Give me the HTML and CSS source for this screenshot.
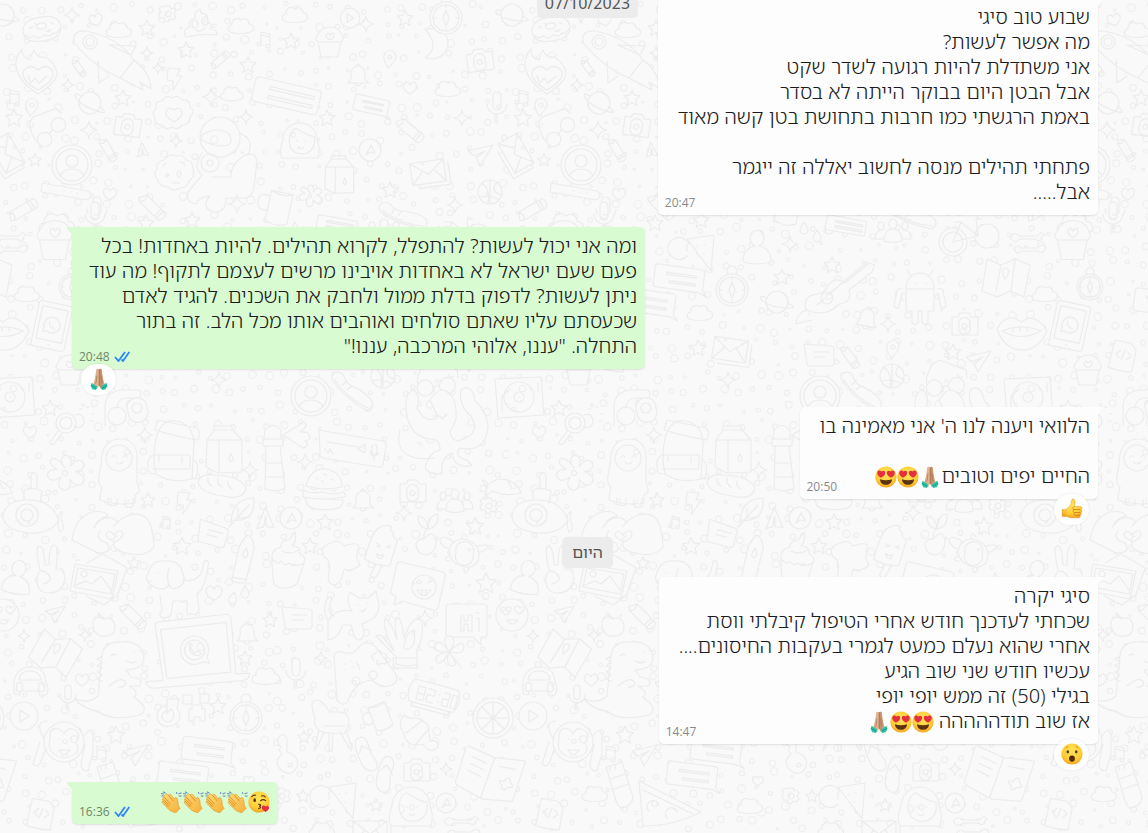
FILE: index.html
```html
<!DOCTYPE html>
<html lang="he" dir="rtl">
<head>
<meta charset="utf-8">
<meta name="viewport" content="width=device-width, initial-scale=1">
<title>צ'אט</title>
<link rel="stylesheet" href="styles.css">
</head>
<body>
<svg class="wallpaper" aria-hidden="true">
  <defs><pattern id="doodles" width="509" height="833" patternUnits="userSpaceOnUse"></pattern></defs>
  <rect width="100%" height="100%" fill="url(#doodles)"/>
</svg>
<svg class="sprite" aria-hidden="true">
  <defs>
    <radialGradient id="face" cx=".5" cy=".35" r=".7"><stop offset="0" stop-color="#ffe65c"/><stop offset=".65" stop-color="#ffcb35"/><stop offset="1" stop-color="#f09a1c"/></radialGradient>
    <linearGradient id="skin" x1="0" y1="0" x2="1" y2="1"><stop offset="0" stop-color="#ffdb78"/><stop offset="1" stop-color="#f5ae35"/></linearGradient>
    <linearGradient id="tan" x1="0" x2="1"><stop offset="0" stop-color="#d6a27c"/><stop offset=".48" stop-color="#e6bb98"/><stop offset=".52" stop-color="#b98562"/><stop offset="1" stop-color="#e0b08c"/></linearGradient>
  </defs>
  <symbol id="love" viewBox="0 0 22 22">
    <circle cx="11" cy="11" r="10.6" fill="url(#face)"/>
    <path d="M5 13.2c3.500 1.300 8.500 1.300 12 0c0 3.500-2.500 5.600-6 5.600s-6-2.100-6-5.600z" fill="#5c3312"/>
    <path d="M6 11.800C3.800 10.300 1.800 8.600 2.300 6.200c.4-2 3-2.500 4.100-.6c1.500-1.500 3.900-.6 3.800 1.400c-.1 2-2.100 3.500-4.200 4.800z" fill="#e62e3f"/>
    <path d="M16 11.800c2.200-1.500 4.200-3.200 3.700-5.600c-.4-2-3-2.500-4.100-.6c-1.500-1.500-3.900-.6-3.800 1.400c.1 2 2.100 3.500 4.200 4.800z" fill="#e62e3f"/>
  </symbol>
  <symbol id="pray" viewBox="0 0 22 22">
    <path d="M8.300 1.200c.8-.8 1.800-.6 2.700 0c.9-.6 1.900-.8 2.700 0c.5 3.800.9 7.500 1.700 10.700c.7 2.400 1.100 4.400 1.600 6.400L13 21l-2-3.500L9 21l-4-2.700c.5-2 .9-4 1.600-6.400c.8-3.200 1.200-6.900 1.700-10.700z" fill="url(#tan)"/>
    <path d="M11 1.500v16M8.900 7.500c-.3 3-.3 6-1.200 8M13.100 7.500c.3 3 .3 6 1.200 8" fill="none" stroke="#a06b4a" stroke-width=".6"/>
    <path d="M3.600 14.800L9.200 18.400L8 22L4.300 21.200L2.600 18z M18.400 14.800L12.800 18.400L14 22l3.700-.8L19.400 18z" fill="#2cc4aa"/>
    <path d="M3.300 17.400l5 3M18.700 17.400l-5 3" stroke="#0c8f7a" stroke-width=".8"/>
  </symbol>
  <symbol id="clap" viewBox="0 0 22 22">
    <path d="M1 2.500l3 .5M3 .8l2.500 1.500M18.500 3l3-1.200M18.800 5l2.700.1M16.500 1l.4 2M1.500 5.200l2-.7" stroke="#6f8fc6" stroke-width="1.100"/>
    <path d="M5.500 3.200c1.200-.7 2.100 0 2.900.9c.8-1.200 2.200-.8 3 .1l2.800 3.600c.4-1.300 1.700-2 2.500-.8c1.200 1.900 1.400 4 1.500 6.200c.1 1.600.7 2.700 2.100 3.800l-4.700 5c-1.900-1.400-4.600-1.300-6.600-3.300L2.700 12.300c-.9-1-.5-2 .3-2.400c-.8-1-.6-1.800.2-2.300c-.5-1.100 0-1.800.8-2.100c0-.8.500-1.900 1.500-2.300z" fill="url(#skin)" stroke="#e0921e" stroke-width=".6"/>
    <path d="M4 5.800l6.500 7.400M3.200 7.800l6.100 6.900M3 10l5.500 6M8.300 4.200l5.300 6.200" fill="none" stroke="#d98518" stroke-width=".8"/>
  </symbol>
  <symbol id="kiss" viewBox="0 0 22 22">
    <circle cx="11" cy="11" r="10.600" fill="url(#face)"/>
    <ellipse cx="6.700" cy="9.200" rx="1.300" ry="1.900" fill="#5c3312"/>
    <path d="M3.800 5.800c1-1.400 2.400-1.900 3.800-1.600M13.500 5c1.500-.5 2.900 0 3.800 1M12.600 9.800c1.500-1.400 3.700-1.300 5-.1M10.500 13.200c2.800-.2 2.600 1.700.6 2c2.200.2 2.100 2-.5 2.200" fill="none" stroke="#5c3312" stroke-width="1.100" stroke-linecap="round"/>
    <path d="M17.700 21c-2.400-1.400-4.300-2.900-3.800-5c.4-1.700 2.700-1.900 3.500-.4c1.200-1.300 3.700-.7 3.700 1.100c0 1.800-1.700 3-3.400 4.300z" fill="#e62e3f"/>
  </symbol>
  <symbol id="thumb" viewBox="0 0 22 22">
    <path d="M1.200 11.600h3.600c2.600-1.600 5-4.300 5.400-6.900c.2-1.500.2-3.500 1.700-3.600c2.800 0 2.600 4.300 1.300 7.300h5.800c2.100 0 2.500 2.500 1 3.200c1.200.7 1 2.600-.2 3c.8 1 .3 2.400-.7 2.700c.5 1.300-.3 2.500-1.700 2.500H11c-2.200 0-3.600-.6-5-1.400H1.200z" fill="url(#face)" stroke="#e0921e" stroke-width=".5"/>
    <path d="M13.500 8.500c-2 .8-2.500 2.500-.5 3h6.500M13 11.600c-1.400 1-1 2.700.5 2.900h6M13.500 14.500c-1.300 1.100-.7 2.600.7 2.800h5" fill="none" stroke="#d07c12" stroke-width=".8"/>
  </symbol>
  <symbol id="wow" viewBox="0 0 22 22">
    <circle cx="11" cy="11" r="10.600" fill="url(#face)"/>
    <ellipse cx="6.800" cy="8.800" rx="1.300" ry="1.600" fill="#5c3312"/><ellipse cx="15.200" cy="8.800" rx="1.300" ry="1.600" fill="#5c3312"/>
    <path d="M4.300 5.400c.8-1.100 1.700-1.600 2.900-1.700M17.700 5.400c-.8-1.100-1.700-1.600-2.900-1.700" fill="none" stroke="#c98520" stroke-width=".9"/>
    <ellipse cx="11" cy="15.600" rx="2.900" ry="3.100" fill="#54290d"/>
  </symbol>
  <symbol id="ticks" viewBox="0 0 16 11"><path d="M1 6l3.500 4L11 1M7.500 8.500L9 10L15.300 1" fill="none" stroke="#2f86f6" stroke-width="1.800"/></symbol>
  <symbol id="tail" viewBox="0 0 8 10"><path d="M0 0h6q2 0 1 1.500Q5 4 0 10z"/></symbol>
</svg>

<main class="chat">
  <div class="day day--floating"><time>07/10/2023</time></div>

  <article class="row row--in"><div class="bubble">
    <svg class="tail"><use href="#tail"/></svg>
    <p class="text">שבוע טוב סיגי<br>מה אפשר לעשות?<br>אני משתדלת להיות רגועה לשדר שקט<br>אבל הבטן היום בבוקר הייתה לא בסדר<br>באמת הרגשתי כמו חרבות בתחושת בטן קשה מאוד<br><br>פתחתי תהילים מנסה לחשוב יאללה זה ייגמר<br>אבל.....</p>
    <div class="meta"><time>20:47</time></div>
  </div></article>

  <article class="row row--out row--reacted"><div class="bubble bubble--long">
    <svg class="tail"><use href="#tail"/></svg>
    <p class="text">ומה אני יכול לעשות? להתפלל, לקרוא תהילים. להיות באחדות! בכל פעם שעם ישראל לא באחדות אויבינו מרשים לעצמם לתקוף! מה עוד ניתן לעשות? לדפוק בדלת ממול ולחבק את השכנים. להגיד לאדם שכעסתם עליו שאתם סולחים ואוהבים אותו מכל הלב. זה בתור התחלה. "עננו, אלוהי המרכבה, עננו!"</p>
    <div class="meta"><time>20:48</time><svg class="ticks" role="img" aria-label="נקרא"><use href="#ticks"/></svg></div>
    <button class="reaction" type="button" aria-label="🙏🏽"><svg class="emoji"><use href="#pray"/></svg></button>
  </div></article>

  <article class="row row--in row--reacted"><div class="bubble">
    <svg class="tail"><use href="#tail"/></svg>
    <p class="text">הלוואי ויענה לנו ה' אני מאמינה בו<br><br>החיים יפים וטובים<svg class="emoji" role="img" aria-label="🙏🏽"><use href="#pray"/></svg><svg class="emoji" role="img" aria-label="😍"><use href="#love"/></svg><svg class="emoji" role="img" aria-label="😍"><use href="#love"/></svg></p>
    <div class="meta"><time>20:50</time></div>
    <button class="reaction" type="button" aria-label="👍"><svg class="emoji"><use href="#thumb"/></svg></button>
  </div></article>

  <div class="day"><span>היום</span></div>

  <article class="row row--in row--reacted"><div class="bubble">
    <svg class="tail"><use href="#tail"/></svg>
    <p class="text">סיגי יקרה<br>שכחתי לעדכנך חודש אחרי הטיפול קיבלתי ווסת<br>אחרי שהוא נעלם כמעט לגמרי בעקבות החיסונים....<br>עכשיו חודש שני שוב הגיע<br>בגילי (50) זה ממש יופי יופי<br>אז שוב תודההההה <svg class="emoji" role="img" aria-label="😍"><use href="#love"/></svg><svg class="emoji" role="img" aria-label="😍"><use href="#love"/></svg><svg class="emoji" role="img" aria-label="🙏🏽"><use href="#pray"/></svg></p>
    <div class="meta"><time>14:47</time></div>
    <button class="reaction" type="button" aria-label="😮"><svg class="emoji"><use href="#wow"/></svg></button>
  </div></article>

  <article class="row row--out"><div class="bubble bubble--short">
    <svg class="tail"><use href="#tail"/></svg>
    <p class="text"><svg class="emoji" role="img" aria-label="😘"><use href="#kiss"/></svg><svg class="emoji" role="img" aria-label="👏"><use href="#clap"/></svg><svg class="emoji" role="img" aria-label="👏"><use href="#clap"/></svg><svg class="emoji" role="img" aria-label="👏"><use href="#clap"/></svg><svg class="emoji" role="img" aria-label="👏"><use href="#clap"/></svg></p>
    <div class="meta"><time>16:36</time><svg class="ticks" role="img" aria-label="נקרא"><use href="#ticks"/></svg></div>
  </div></article>
</main>
<script src="wallpaper.js"></script>
</body>
</html>
```
FILE: styles.css
```css
* { box-sizing: border-box; }

body {
  margin: 0;
  background: #f9f9f9;
  color: #1c1c1c;
  font-family: "Noto Sans Hebrew", "Open Sans", "Noto Sans", sans-serif;
  font-size: 20px;
  font-weight: 300;
  line-height: 25px;
  height: 100vh;
  overflow: hidden;
}

.wallpaper {
  position: absolute;
  inset: 0;
  width: 100%;
  height: 100%;
}
.wallpaper path,
.wallpaper circle {
  fill: #f9f9f9;
  stroke: #ececec;
  stroke-width: 1.2;
  stroke-linejoin: round;
  stroke-linecap: round;
  vector-effect: non-scaling-stroke;
}
.wallpaper circle { stroke: #efefef; }

.sprite { position: absolute; width: 0; height: 0; }

.chat {
  position: relative;
  display: flex;
  flex-direction: column;
  margin-top: -14px;
  padding-left: 27px;
}

.row { display: flex; margin-top: 12px; padding: 0 50px 0 45px; }
.row--out { justify-content: flex-end; }
.row--reacted { padding-bottom: 26px; }
.day + .row { margin-top: 9px; }
.day--floating + .row { margin-top: 12px; }

.bubble {
  position: relative;
  max-width: 573px;
  padding: 6px 8px 11px 20px;
  border-radius: 5px;
  background: #fdfdfd;
  box-shadow: 0 1px 2px rgba(0, 0, 0, 0.1);
}
.row--out .bubble { background: #d9fbd1; }
.bubble--long { padding-left: 8px; }
.bubble--short { padding-left: 88px; }

.tail {
  position: absolute;
  top: 0;
  right: -6px;
  width: 8px;
  height: 10px;
  fill: #fdfdfd;
}
.row--out .tail {
  right: auto;
  left: -6px;
  fill: #d9fbd1;
  transform: scaleX(-1);
}

.text { margin: 0; }

.emoji {
  width: 22px;
  height: 22px;
  vertical-align: -5px;
}

.meta {
  position: absolute;
  left: 7px;
  bottom: 4px;
  display: flex;
  direction: ltr;
  align-items: flex-start;
  gap: 4px;
  color: #8a8a8a;
  font-family: "Open Sans", "Noto Sans", sans-serif;
  font-size: 12px;
  font-weight: 400;
  line-height: 16px;
}
.row--out .meta { color: #6d8768; }
.ticks { width: 16px; height: 11px; margin-top: 2px; }

.reaction {
  position: absolute;
  right: 9px;
  bottom: -26px;
  display: flex;
  align-items: center;
  justify-content: center;
  width: 35px;
  height: 31px;
  padding: 0 0 2px;
  border: 0;
  border-radius: 16px;
  background: #fff;
  box-shadow: 0 0 2px rgba(0, 0, 0, 0.12);
}
.row--out .reaction { right: auto; left: 9px; }

.day {
  align-self: center;
  margin-top: 12px;
  padding: 3px 10px;
  border-radius: 5px;
  background: #ececec;
  color: #545454;
  font-size: 16px;
  font-weight: 400;
}
.day--floating { position: absolute; top: 1px; margin: 0; padding: 4px 8px 2px; }
```
FILE: wallpaper.js
```js
const star = 'M0-8l2.400 5.200l5.600.6l-4.200 3.900l1.200 5.800l-5-3l-5 3l1.200-5.800l-4.200-3.900l5.600-.6z';
const shapes = {
  star,
  spark: 'M0-8q1 7 8 8q-7 1-8 8q-1-7-8-8q7-1 8-8z',
  heart: 'M0 6C-6 3-8-1-6-4c2-3 5-2 6 1c1-3 4-4 6-1c2 3 0 7-6 10z',
  cloud: 'M-11 7c-3-2-2-7 2-7c-1-5 5-9 9-5c4-3 8 0 8 4c5 0 6 6 2 8c-6 2-15 2-21 0z',
  music: 'M-5 6v-12l9 2v12M-5-3l9 2M-5 6a2 2 0 1 0-3 2q3 0 3-2M4 8a2 2 0 1 0-3 2q3 0 3-2',
  gear: 'M-2-8h4l1 3l3-1l2 3l-2 3l2 3l-3 3l-3-1l-2 3l-3-1l-1-3l-4 0l-1-4l2-2l-2-3l3-3l3 1zM3 0a3 3 0 1 0-6 0a3 3 0 1 0 6 0',
  drop: 'M0-6q-4 6-4 8a4 4 0 0 0 8 0q0-2-4-8z',
  pin: 'M-2 8q-5-8-4-12a6 6 0 0 1 12 1q-1 5-8 11zM2-3a2 2 0 1 0-4 0a2 2 0 1 0 4 0',
  plane: 'M-12-4L13-10L0 11L-4 3L5-4L-6 1z',
  crayon: 'M-16 3l4-8l26 0q4 4 0 10h-26zM-12-5l2 5l-2 5M8-5v10M11-5v10',
  bell: 'M-10 8q4-3 3-10a7 7 0 0 1 14 0q-1 7 4 10zM-2-9a2 2 0 1 1 4 0M-3 8a3 3 0 0 0 6 0',
  mic: 'M-4-12a4 4 0 0 1 8 0v10a4 4 0 0 1-8 0zM-10-4a10 10 0 0 0 20 0M0 6v9M-2 6v9',
  camera: 'M-13-7h6l2-4h9l2 4h7v18h-26zM5 2a6 6 0 1 0-11 0a6 6 0 1 0 11 0M2 2a2.500 2.500 0 1 0-5 0a2.500 2.500 0 1 0 5 0',
  msg: 'M-16-11l3 20q0 2 3 2h21q3 0 3-3v-14q0-3-3-3zM-6-3h15M-6 2h11',
  speech: 'M-23-11h44q3 0 3 3v18l5 5l-9-3h-43q-3 0-3-3v-17q0-3 3-3zM-14-4h30v2h-30zM-10 4h26v2h-26z',
  envelope: 'M-19-11h34v22h-34zM-19-11l17 13l17-13M-19 11l12-13M15 11l-11-13M19-8v23h-32',
  user: 'M20 0a20 20 0 1 0-40 0a20 20 0 1 0 40 0M16 0a16 16 0 1 0-32 0a16 16 0 1 0 32 0M6-4a6 6 0 1 0-12 0a6 6 0 1 0 12 0M-12 11q3-7 12-7t12 7',
  compass: 'M16 0a16 16 0 1 0-32 0a16 16 0 1 0 32 0M13 0a13 13 0 1 0-26 0a13 13 0 1 0 26 0M0-8l3 8l-3 8l-3-8zM-4-16a5 5 0 1 1 8 0M10 0h3M-13 0h3M0 10v3M0-13v3',
  planet: 'M11 0a11 11 0 1 0-22 0a11 11 0 1 0 22 0M-10-4q-8-3-6 1q7 9 30 9q6-1-4-5',
  donut: 'M19 0q0 12-19 12t-19-12q0-12 19-12t19 12M-18 3q5 6 9 2q5 6 10 1q5 4 9 0q5 2 9-5M5-3q0 3-5 3t-5-3t5-3t5 3M-12-3l3-1M9-5l3 2M-6-7l2 2M5 3l3-1',
  rocket: 'M-38-10q-2-12 12-11q32 6 48 29l-14 18q-28-12-46-36zM-15-10a7 7 0 1 0-14 0a7 7 0 1 0 14 0M-18-10a4 4 0 1 0-8 0a4 4 0 1 0 8 0M-3-7l27 1l-5 9zM-14 9l1 22l10-7M8 26l14-18q16 12 17 29l-11-7l3 8z',
  poop: 'M-14 13q-5-7 4-10q-3-7 5-9q-1-6 5-9q0 5 5 5q4 3 2 8q7 2 3 7q8 0 7 6q-16-2-31 2zM-2 0a3 4 0 1 0-6 0a3 4 0 1 0 6 0M8-3a3 4 0 1 0-6 0a3 4 0 1 0 6 0M-4 6q5 3 9-2',
  flame: 'M-20-2q-4-12 5-22q0 9 8 11q1-6 4-10q4 9 11 7q10 5 12 16q0 9-19 21q-17-11-21-23zM1-3q7-7 14 0q5 9-14 20q-19-11-14-20q7-7 14 0M-9 3l3 7l4-5l4 5l8-7',
  badge: 'M-18-5q-2-8 6-8q4-7 10-3q6-4 10 2q8-1 8 7q6 5 0 10q0 8-8 8q-5 6-10 2q-6 4-10-2q-8 0-7-7q-4-5 1-9zM0 8q-10-6-8-11q4-5 8-1q5-4 8 1q1 6-8 11z',
  glasses: 'M-20-12l6-6l28 0l3 7M-20-12q-2 14 1 20M-2 10a8 8 0 1 0-16 0a8 8 0 1 0 16 0M18 0a8 8 0 1 0-16 0a8 8 0 1 0 16 0M-3 6l5-3',
  cookie: 'M19-3q2 8-4 12q-1 7-9 7q-7 4-12-1q-9 0-10-7q-6-6-1-11q-1-8 7-9q5-7 12-4q8-2 10 4q7 1 7 9zM-11-6l3-3M-8 5q0-5 3-2zM5-10q7 0 5 4M7 2a2 3 0 1 0-4 0a2 3 0 1 0 4 0M-1 11h6',
  astro: 'M20-28a20 20 0 1 0-40 0a20 20 0 1 0 40 0M-18-30q17-10 28 0q3 8-2 10q-13 3-26-5zM-18-12q-10 15 0 22l-14 17q-3 10 8 12q4-8 14-8q-10 12 4 16q12 1 12-14h16q10 1 12-10l3-28q-2-8-12-5q-15 10-14 22h-19M20-32q15 7 8 22M-1-2a9 9 0 1 0-18 0a9 9 0 1 0 18 0M-7-2a3 3 0 1 0-6 0a3 3 0 1 0 6 0',
  ruler: 'M-24-8l46 8q4 2 2 7l-3 2l-46-8zM-2 0h1M5 1h1M11 2h1',
  mug: 'M-10-16h22v30q-11 6-22 0zM-10-10q-12-3-11 8q1 9 11 6M-10-16q11 5 22 0',
  card: 'M-28-12h60q3 0 3 4v18q0 3-3 3h-60q-4 0-4-4v-17q0-4 4-4zM-16-5h45v3h-45zM-16 4h45v3h-45z',
  person: 'M-14 12q0-14 12-16a7 8 0 1 1 4 0q13 3 12 16q-14 4-28 0z',
  people: 'M-9 9q0-12 9-12t9 12q-9 3-18 0M4-8a4 5 0 1 0-8 0a4 5 0 1 0 8 0M-10 7h-8q0-9 8-9M10 7h8q0-9-8-9M-9-6a3 4 0 1 0-6 0a3 4 0 1 0 6 0M15-6a3 4 0 1 0-6 0a3 4 0 1 0 6 0',
  bike: 'M-2 6a14 14 0 1 0-28 0a14 14 0 1 0 28 0M-6 6a10 10 0 1 0-20 0a10 10 0 1 0 20 0M30 0a12 12 0 1 0-24 0a12 12 0 1 0 24 0M-16 6l8-20l17 14l-25 6M-8-14h-7M9 0l-2-17h6',
  slice: 'M-16-11l27-4l-3 36zM-14-6a11 11 0 1 0-2 12M-16-6v7M-6-4h1M1-5h1M0 4h1',
  map: 'M-18-18l14 6l14-6l15 6l-6 32l-14-6l-13 6l-15-6zM-4-12l-5 26M10-18l-4 32M3-4a3 3 0 1 0-5 0q0 3 2 6q3-3 3-6',
  android: 'M-14-11a14 14 0 0 1 28 0v24h-6v12q-3 3-6 0v-12h-4v12q-3 3-6 0v-12h-6zM-14-9h28M-9-22l-4-6M9-22l4-6M-18-9q-4-2-5 2l-3 15q2 4 5 1l3-14M18-9q4-2 5 2l3 15q-2 4-5 1l-3-14M-5-15h1M5-15h1',
  guitar: 'M-34 18q-4-14 11-16q8-1 11-9q8-9 17-2l24-20l6 2l-3 7l-23 18q4 12-10 14q-12 14-33 6zM-7 6a6 6 0 1 0-12 0a6 6 0 1 0 12 0M-23 13l7-6M-12 3l39-33M-34 18q-10 4-10 14l16-4',
  tablet: 'M-14-22h28q3 0 3 3v40q0 3-3 3h-28q-3 0-3-3v-40q0-3 3-3zM-13-17h26v33h-26zM8 0a8 8 0 1 0-15 4l-1 4l4-1a8 8 0 0 0 12-7M-3-3q0 6 6 6M0 20h1',
  lips: 'M-25-4q7-13 17-11l7 4l7-4q12 0 19 13q-9 20-26 19q-17-1-24-21zM-20-2q20-8 39 0q-20 11-39 0M-9-5v4M-2-6v4M5-6v4',
  ball: 'M12 0a12 12 0 1 0-24 0a12 12 0 1 0 24 0M-8-9q9 8 6 20M7-10q-8 10 5 13M-11 5q11-3 20 3M0-12v24',
  shoe: 'M-24-11q5-3 9 0q6 8 14 7q15 2 22 8q3 7-3 10q-27-5-42-17q-4-5 0-8zM-22-4q17 13 40 15M-10-7l-3 5M-4-3l-3 4',
  jar: 'M-12-7q3-8 12-8t12 8q3 4-1 7l-3 15h-17l-3-15q-4-3 0-7M-12 0h24M-4-7q2-4 4 0q3-4 4 0q0 3-4 5q-4-2-4-5',
  doc: 'M-11-13h17l6 6v22q-12 2-24 0zM-3-4l-4 4l4 4M4-4l4 4l-4 4M1-5l-2 10',
  turntable: 'M-24-18l46-2l3 38l-46 3zM15 0a15 15 0 1 0-30 0a15 15 0 1 0 30 0M5 0a5 5 0 1 0-10 0a5 5 0 1 0 10 0M-9-8l-8 7v16M19-14v9M1 0h-1',
  phones: 'M-21 14v-19q0-17 20-17h14q4 3 0 8h-12q-9 0-10 10M0 4a9 9 0 1 0-18 0a9 9 0 1 0 18 0M21-4a10 10 0 1 0-19 4a10 10 0 1 0 19-4M16-4a5 5 0 1 0-10 0a5 5 0 1 0 10 0',
  magnify: 'M10-2a10 10 0 1 0-20 0a10 10 0 1 0 20 0M6-2a6 6 0 1 0-12 0a6 6 0 1 0 12 0M-8 6l-8 11q0 4 4 2l8-11M9-10q9-3 9 8q-2 6-10 4M13-16h3M20-18h3M26-11h2M24-4h3',
  kid: 'M-16-5q0-26 19-26t17 24v20q5 10-2 12v8q-16 3-35-3q0-7 2-13q-6-2-1-22M15-12a13 13 0 1 0-26 0a13 13 0 1 0 26 0M-5-13q2-3 4 0M6-13q2-3 4 0M-1-8q3 4 7 0M-9 28v6q5 3 9 0v-5M8 30v6q4 3 8 0v-8',
  flower: 'M0-4c-9-11 8-14 4-1c8-12 17 2 4 4c13 4 4 17-4 6c2 13-14 9-7-2c-10 8-16-6-3-6c-11-5-3-15 6-1M2 0a2 2 0 1 0-4 0a2 2 0 1 0 4 0',
  sub: 'M-27 2q1-17 25-17q24 0 31 20q-8 14-29 13q-25-2-27-16zM-6-15v-10q9-3 18 1l-2 12M1-26v-14q3-4 6 0v14M8 0a11 11 0 1 0-22 0a11 11 0 1 0 22 0M3 0a6 6 0 1 0-12 0a6 6 0 1 0 12 0M27 3q8-13 4 0q5 13-1 14q-3-7-1-12',
  pack: 'M-16-12q6-20 20-17q16 2 18 21l-2 37q-22 5-36-5q-4-16 0-36zM-19 5h37v14h-37M-13 5v6M10 7v6M-14-30l39 8q4 3 1 12q-20-3-43-10zM-18 5q-9 2-5 18l6 1M22 10q6 4 2 18l-5 1',
  milk: 'M-18-10l7-10l19 0l9 10v32l-24 1l-12-6zM-11-20v-4h18v4M-18-10l35 0M-6-10v32M6 4q-4 6 0 8q4-2 0-8',
  light: 'M-10-25q8-9 16 0v9h-17zM-12-16h20v7h-20zM-9-9h14l5 42q-9 5-20 1zM-8 8h15M-9 22h18M8-20l21-13q6 3-4 10q10-1 9 4q4 3-4 5q6 4-2 7z',
  banner: 'M-33-20l64 11q4 1 3 5l-3 18q0 4-5 3l-55-9q-4-1-3-6zM-25-8l31 5M-27-1l3 4l2-4l3 5M6-1l7-5v9zM20-4q3-3 5 0v7q-3 3-5 0zM18 1q2 9 9 2M22 7v4',
  squid: 'M-12-30q12-20 24 0q6 20-4 31q2 16 19 5q10-7 2-20q-13-11-10-26q11-7 14 10q13 14 13 27q-2 26-28 21q-7 8 7 12l5 6q-18 3-20-13q-12 5-10 21q-20 0-16-10q5-13 14-14q0-12-10-11q-18-2-23-22q-4-25 7-27q7 5 3 18q9 17 21 9zM-10-14l8 0l2 3l5-5M-42 0q-5 20 10 26q9 4 24 2',
  bread: 'M-24-3q2-9 17-7q27 1 31 14q-4 12-23 7q-23-3-25-14M-14-7q-1 5 4 8M-4-7q-1 6 4 9M6-4q-1 5 4 8',
  burger: 'M-18-3q4-18 20-17q16 3 16 18q-18 4-36-1zM-21 1q7 4 20 2q10 4 20 0q4 2 2 5q-21 4-42 0zM-19 9l38 2q0 9-9 9q-16 2-26-3zM-8-11l2 1M0-15l2 1M7-10l2 1M-2-8l1 1',
  fish: 'M-16 3q11-12 24-6q9 5 11 12q-17 4-28-2l-8 5l2-9l-5-7q5 0 6 5M5-5l5 10M12 4h1',
  hands: 'M-42 12q3-22 20-28q13-2 16 4q-10 2-14 12q6-12 18-10q9 3 2 8q7-9 16-11q16-4 21 11q3 10 3 21q-8 10-23 7q-20-3-17-12q-2-4 3-6M-14 3q-6 8 7 12q7 10-9 10l-14-7l-12-6M0 7q7-8 9-1q0 4-8 8q-9-4-9-8q3-6 8 1',
  bolt: 'M-6-10l12 1l-3 7h5l-9 14v-9l-6-1z',
  leaf: 'M-12 13q0-27 23-27q2 25-23 22M-14 15l20-22M-5 5v-9M-4 6l11-1',
  round: 'M11 0a11 11 0 1 0-22 0a11 11 0 1 0 22 0M-4 5l5-10l4 8l-5-1z',
  cherry: 'M-4 1q11-12 12 4q-1 10-9 12q-10 0-11-11q2-6 8-5q-1-8 4-10q-10-1-10-13q9 1 10 13q1-15 10-15q1 13-10 15',
  pop: 'M-14 11q3-25 9-32q6-6 13-4q-2 4 3 6q-1 6 5 6l-4 27q-11 3-26-3M-2 15l-4 11q3 4 6 1l4-11M-4-6l4 2l-4 1M10-6l-4 2l4 1M-3 4q4 3 7 0l-1 4q-4 2-6-4',
  turtle: 'M15 2q0 14-14 13q-15-3-16-16q2-12 15-12q14 3 15 15M9 2a9 9 0 1 0-17-1a9 9 0 1 0 17 1M-10-10q-13-9-14-1q2 6 9 8M-2-14q0-9 5-1M13-6q15-3 9 3q-4 4-8 3M0 16q0 10 5 0M-15 4q-8 4 1 5',
  blob: 'M-17-14q14-9 19 0q14-5 15 1q-5 9 1 18q-7 7-16 4q-2 14-9 16q-9-1-6-12q2-14-5-16q-4-8 1-11z',
  cupcake: 'M-16-4q-1-10 9-12q-1-6 8-7q3-4 6-8q2 10-3 14q9 0 8 8q7 3 4 9l-7 21q-13 8-23 1q-2-15-2-26zM-16-4q7 7 9 2q4 6 8 2q5 5 15 0M-6-12q8 4 17-1',
  bottle: 'M-7-10l3-7q4-9 9-1l3 8l-4 35q-7 3-14 0zM0-9q-5 8 0 10q5-3 0-10M-10 22h14',
  dog: 'M-27-12q4-14 18-12q14-1 17 13q4 9-6 14q-7 2-8-4q-3 7-13 4q-13-6-8-15M-6-17q-3 10 0 18M-18-12h1M-26-4h3M8-5q19 4 21-19q6-2 4 5q-3 23-11 28l2 16q-2 6-8 4l-4 0v-13l-14 0l-2 14q-7 5-11 1v-3l2-2l-2-15',
  photo: 'M-25-13l43 7l-6 28l-42-8zM-20-17l-5 0M-22-9l37 6l-4 20l-37-7zM-13-14l16-9l16 9l8 5l-9 26M-24 8l10-4l6 3l9-8l10 14M-13-3a3 3 0 1 0-6 0a3 3 0 1 0 6 0M-14 19l18 9l14-10',
  peace: 'M-12 0q-5-22-1-24q5-1 6 19l4 0q0-20 5-20q5 0 2 24q9 0 9 10q-3 14-16 14q-13 0-12-15q2-12 11-4q6 7-5 10',
  pet: 'M-22 26v-19q7-13 24-10q-7-10-2-19l9 6h9l8-7l3 14q0 10-7 14l-10 5q4 9 0 14q-5 5-8-2l-3-11h-8l-5 10q-7 5-10 5M-22 7q-7-15 1-24q5-2 1 6q-2 12 4 13M7-9h1M17-11h1M10-4q3 4 6-1',
  wink: 'M-21-21q0-3 4-2l42 10q3 2 2 5l-7 31q-2 3-5 2l-31-9l-8 4l2-9q-7-2-5-6zM18 2a12 12 0 1 0-24 0a12 12 0 1 0 24 0M3-3a2 2 0 1 0-4 0a2 2 0 1 0 4 0M9-2l5-2M-1 5h14q-8 11-14 0M4 6v5M8 6v5',
  bubble: 'M-17-16h35q3 0 3 3v27q0 3-3 3h-3v8l-8-8h-24q-3 0-3-3v-27q0-3 3-3zM-5-5v16M10-7h3M10-2h3v13M-2-5v6h4v-6h4v16h-4v-7h-4v7h-4',
  smiley: 'M16 0a16 16 0 1 0-32 0a16 16 0 1 0 32 0M-6 0q-7-3-5-7q4-2 5 1q2-4 5-1q1 3-5 7M7-1q-6-4-4-7q4-2 5 1q3-3 4 0q0 3-5 6M-5 5h11q-5 8-11 0',
  apple: 'M0-5q-12-5-11 7q2 11 11 10q11 1 11-10q-2-11-11-7q-3-3-6-6M0-6q-5-2-5-5',
  dino: 'M-14-20q1-15 20-14q21-1 22 17q-1 10-18 11l5 7q13 1 9 9h-11q11 6 5 11l7 6q7 7-1 12q-30 7-42-4q-14-1-24-13q13 7 24-2zM18-24h1M23-25h1M10-15q7 4 10 0M-5-20q3-3 5-1M-7 10q13-11 17-3q-2 5-7 4M-14-20l-5 3l5 3l-5 4l5 2l-5 4l5 3l-5 4l5 2',
  laptop: 'M-38-34q0-4 4-4l68-4q4 0 4 4l2 56h14q-1 7-8 7l-88 3q-7 0-8-7h17zM-33-30l66-4l2 50l-64 3zM14-8a14 14 0 1 0-28 0a14 14 0 0 0 22 12l6 2l-2-6q2-4 2-8M10-8a10 10 0 1 0-20 0a10 10 0 1 0 20 0M-5-11q0 9 10 9l1-3l-3-2l-3 2l-4-5l2-3l-2-2z',
  pad: 'M-28-19q2-7 12-3q7 2 13-6q7-8 16-1l20 27q5 8-3 12q-10 5-20-5q-18 2-24 21q-5 7-11-1zM12-15q-5-5 1-6q3-7 7-1q7 0 3 6q3 7-3 4q-6 4-5-3M-18-11h1M-12-14h1M-17-5h1M-9-8h1M-5-12l3 7M15 0a4 4 0 1 0-8 0a4 4 0 1 0 8 0M-2 6a4 4 0 1 0-8 0a4 4 0 1 0 8 0',
  ok: 'M-24-5q5-3 9 4l9 11q-14-29-8-32q4 2 11 20q-4-22 1-21q4 1 6 20q9-25 18-17q2 17-5 29v14q-10 4-21 0v-7zM5 1q-4 9 4 7q8-5 5-19q-8 3-9 12M-7 17h24v10h-23z',
  clover: 'M0 0q-19 1-13-9q6-3 13 9q-9-16 1-16q8 3-1 16q15-15 15-4q-1 7-15 4q11 13 3 14q-7-1-3-14q-9 16-13 9q-2-7 13-9l12 15',
  car: 'M-16 11v-13q3-14 17-14t15 15q4 7 0 13h-7v-4h-19v4zM-11-3q1-9 11-9t11 9zM-8 4a3 3 0 1 0-5 0a3 3 0 1 0 5 0M14 4a3 3 0 1 0-5 0a3 3 0 1 0 5 0',
  alarm: 'M-22-13h45q7 10 0 23h-45q-7-11 0-23M-16-7v7h7v-7zM-16 0v6h7v-6M-6-7h7v6h-7v7h7M6-4v1M6 3v1M10-7h6v6h-6v7h6v-7M19-7h5v13h-5zM-19 10v4h38v-4',
  play: 'M14 0a14 14 0 1 0-28 0a14 14 0 1 0 28 0M-4-6l9 6l-9 6z',
  refresh: 'M8-8q7 11-3 17q-12 5-17-6q-1-11 9-14l1 5q-6 3-5 8q5 7 10 2q4-6-1-11l-4 4l0-14h12z',
  blocks: 'M-13-13h9v9h-9zM4-14h9v9h-9zM-4-3h10v4h3v12h-5v-4h-6v4h-5v-12h3z',
  seat: 'M-18-22q6-9 18 9h9q13 1 9 15l-4 7l-17-1q-14-2-12-14q-3-9-3-16M-6 1h21M-11 5l-5 21l3-4l7-14M-1 7v19h3l1-18M10 7l11 19l1-2l-5-17',
  citrus: 'M20 0a20 20 0 1 0-40 0a20 20 0 1 0 40 0M16 0a16 16 0 1 0-32 0a16 16 0 1 0 32 0M0-16v32M-16 0h32M-11-11l22 22M11-11l-22 22',
  monkey: 'M20 0a20 20 0 1 0-40 0a20 20 0 1 0 40 0M-20-3q-10-18 3-18M20-6q6-10 9-1v18l-5 18q-8 0-7-8l4-19M-24 0l-7 22q5 5 8-3l5-13M-14-2q-1-14 9-11q4 2 5 5q2-6 8-5q11 3 4 14q7 12-12 15q-18-4-14-18M-5-3h1M6-3h1M-5 8h11q-6 9-11 0',
  key: 'M-10-16q5-9 9 0v13q13 4 10 15q-6 11-16 3q-8-8 1-16l-3-4l2-3l-3-3zM4 10a2 2 0 1 0-4 0a2 2 0 1 0 4 0',
  croissant: 'M-14-18q4 4 13 3q13 5 12 13l1 10q10-1 8 6q-8 8-15-3q-16 5-20-12q-6-8 1-17zM-12 0l17-13M-3 12l13-15',
  flip: 'M-5-18q10-3 10 10q-1 7 3 15q2 10-5 10q-9-1-10-13q-3-18 2-22M-6-3l4-7l9 7',
  book: 'M-26-23l28 7l31-2l-6 42l-30 3l-27-9q-4-3-2-7l4-33M2-16l-7 42M-20-13l15 4M-21-6l14 4M-22 1l13 4M8-8h16M15 6q5-9 7 0q6 5-2 5q-6 7-6-1q-7-5 1-4',
  sock: 'M-13-20l16-5l11 35q-1 10-13 11l-4-7zM-9-8l15-5M-5 2l15-5M-9-21v4M-4-22v4',
  pizza: 'M-20-22l62 31q-27 14-58 14zM-16-13l50 24M0 3a6 6 0 1 0-10 5M18 9a6 6 0 1 0-10 6',
  girl: 'M19 0a19 19 0 1 0-38 0q-5 12-1 20h40q3-11-1-20M-12 2q0-13 8-15q13 9 20 9q2 15-10 19q-16 2-18-13M-4 1h1M6 1h1M-2 8q4 3 6 0',
  moon: 'M-9-15q23-3 23 15q-3 18-23 14q16-11 0-29',
  wrench: 'M-17-5q4-5 8 0h18q4-6 8-1q-5 1-3 4q-4 3-7 0h-15q-5 5-9 0zM-14 7q5-4 7 0h16q6-6 9 0l-3 4q-3 1-6-1h-15q-6 5-8-3'
};

// name x y [rotation] [scale]
const layout = `donut 42 29 -10;planet 3 15 0 1;spark 72 15;heart 96 20 -15;rocket 112 52;cloud 119 29;star 147 28;gear 168 14;poop 200 24;cloud 241 25;
music 266 38;star 291 41;cloud 295 14;star 186 50;spark 147 53 0 .8;spark 158 68 0 .7;crayon 220 60 -40 .7;star 248 65;flame 37 73;crayon 79 68 55 .6;spark 68 85 0 .8;bolt 174 78;
planet 90 103 15;star 123 98;camera 128 125 8;badge 174 114;spark 211 97 0 1.1;cloud 232 93 0 .9;spark 246 117 0 .9;music 15 96;pin 32 108;star 14 118 0 1.1;glasses 50 128 -20 .9;spark 89 130 0 1.1;
crayon 108 150 60 .8;plane 143 152 -60 .6;spark 176 141 0 .8;star 35 160 0 .8;user 72 165;cookie 174 172;astro 220 165;envelope 8 155 60;ruler 66 191;heart 110 194;crayon 23 210 -30;crayon 152 207 45;mic 97 213;spark 237 204 0 1.1;star 192 220;cloud 57 223 0 1.4;mug 278 208 12;
card 285 95 13;girl 300 140 0 .9;jar 330 42;moon 434 44;compass 446 18;spark 366 24;star 405 18;play 350 18 0 .7;pin 390 60;camera 480 60 -8;bell 358 75;heart 410 88;cloud 448 88;star 327 118;speech 372 105 12 .7;spark 462 118;crayon 410 130 40;mic 497 108;round 370 150;milk 340 175 0 .8;envelope 430 172 -8;star 390 190;plane 480 155;ball 490 192;flower 310 196 0 .8;spark 455 205;shoe 405 215;
star 146 223;drop 295 228;drop 308 236;drop 320 228;card 336 225 10 .6;people 384 232;bike 460 236;wrench 10 241;jar 55 240 0 1.3;mic 95 218;spark 281 244;slice 194 250;person 248 250;star 323 265;map 496 277;android 411 298;guitar 331 292;compass 223 290;star 273 277;planet 268 302;speech 171 278 8;speech 142 302 8;cloud 191 312;cloud 27 293;compass 72 287 0 .8;camera 456 324;tablet 52 325 12;lips 4 333;bell 358 318 10;spark 379 324;envelope 223 350 8;star 189 348;msg 311 355;crayon 341 357 55 .8;pin 384 350;star 444 352;plane 469 361;spark 219 380;ball 383 376;glasses 438 382 20;shoe 354 391 20;user 311 396;jar 70 370;doc 105 355 12;
turntable 10 397;star 50 408;magnify 66 425;heart 30 432;phones 126 412;kid 117 470;flower 65 473 0 1.3;sub 30 515;spark 145 435;pack 172 450;milk 225 450;light 275 455;banner 352 450;squid 442 430;spark 250 470;spark 305 462;bread 222 485;burger 324 489;bell 363 500;camera 413 491;people 455 502;gear 489 506;fish 502 484;hands 114 528;music 167 521 0 .8;star 148 500 0 .9;bolt 184 502;msg 213 534 15;leaf 243 512;plane 266 522 -55 .9;round 291 518;star 325 522;spark 404 513;star 475 526 0 1.1;cherry 428 538;pop 380 550 8;turtle 464 552;blob 342 560;cupcake 288 563;star 310 546;bottle 245 557 8;star 182 546 0 1.1;dog 175 585;photo 100 577;peace 52 570;person 17 580 10;star 134 563 0 .8;heart 214 593 0 1.2;drop 233 598 15;drop 245 592;msg 298 618;pet 350 614;wink 418 585;star 486 583 0 1.300;bubble 466 620;smiley 3 615;crayon 133 616 45;apple 104 624;plane 55 614 0 .8;map 55 652 20;spark 24 636 0 .8;spark 85 635 0 .8;
dino 116 676;laptop 195 658 -3;bell 247 633;star 270 620 0 .9;star 245 658 0 .9;pad 362 675;ok 400 641;spark 425 618;clover 449 652;cloud 266 675 0 1.1;mic 296 674;spark 321 658 0 .8;car 30 683;heart 82 680;alarm 433 697 15;play 24 716;refresh 169 716;blocks 196 708;star 218 706;compass 246 718;seat 330 725;mug 380 717 -20 .8;citrus 493 718;monkey 64 742;star 116 735 0 1.1;music 102 752;plane 135 755;speech 208 750 7;speech 184 775 7;star 304 737 0 .8;key 288 755;croissant 418 733;flip 366 755 -15;flip 385 775 20;camera 417 770;book 490 773 10;sock 110 787;cloud 86 793;doc 41 813 10;pizza 150 803;cloud 241 805;heart 249 781 0 .8;gear 282 796;star 303 796 0 .8;girl 411 806;slice 345 798;star 376 805 0 .8;round 446 803 0 .9;wrench 462 825;envelope 372 832;cloud 322 829;spark 446 769 0 .8;mic 68 698 0 .8`;

const NS = 'http://www.w3.org/2000/svg';
const pattern = document.getElementById('doodles');
const add = (tag, attrs) => {
  const node = document.createElementNS(NS, tag);
  for (const key in attrs) node.setAttribute(key, attrs[key]);
  pattern.appendChild(node);
};

let seed = 7;
const random = () => (seed = (seed * 16807) % 2147483647) / 2147483647;
for (let y = 8; y < 825; y += 16) {
  for (let x = 4; x < 498; x += 17) {
    add('circle', { cx: x + random() * 11, cy: y + random() * 10 - 5, r: 1 + random() * 3 });
  }
}

for (const entry of layout.split(';')) {
  const [name, x, y, turn = 0, scale = 1] = entry.trim().split(' ');
  for (const shift of [-509, 0, 509]) {
    if (Math.abs(+x + shift - 254) < 310) {
      add('path', { d: shapes[name], transform: `translate(${+x + shift} ${y}) rotate(${turn}) scale(${scale})` });
    }
  }
}
```
